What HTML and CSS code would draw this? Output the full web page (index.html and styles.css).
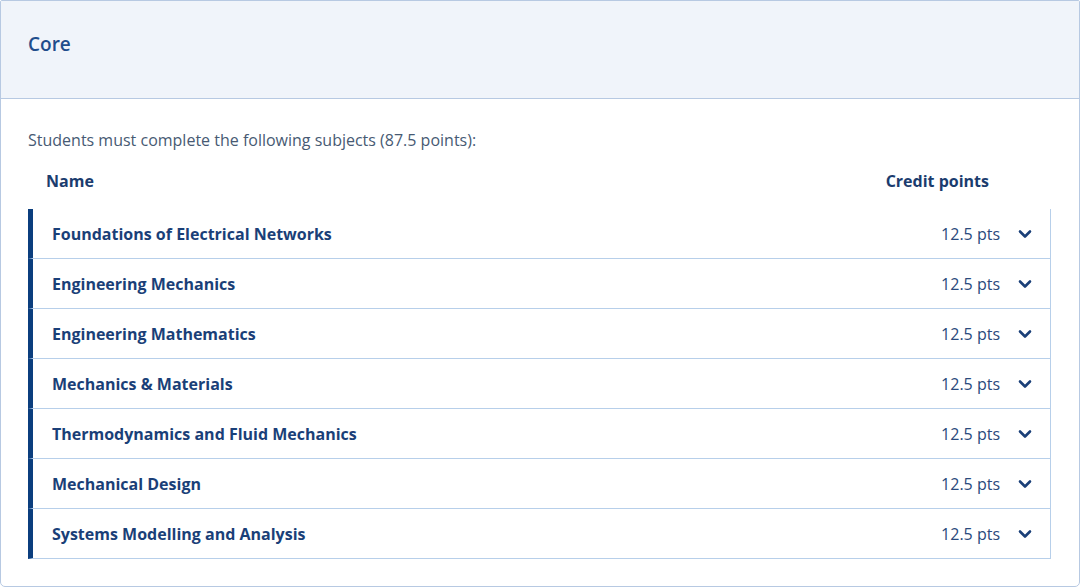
FILE: index.html
```html
<!DOCTYPE html>
<html>
<head>
<meta charset="utf-8">
<link rel="stylesheet" href="styles.css">
</head>
<body>
<section class="card">
  <header class="card-head"><h2 class="card-title">Core</h2></header>
  <div class="card-body">
    <p class="intro">Students must complete the following subjects (87.5 points):</p>
    <div class="thead">
      <span class="th-name">Name</span>
      <span class="th-pts">Credit points</span>
    </div>
    <ul class="rows">
      <li class="row"><span class="name">Foundations of Electrical Networks</span><span class="pts">12.5 pts</span><svg class="chev" viewBox="0 0 14 10" width="14" height="10"><path d="M2 2.5 L7 7.5 L12 2.5" fill="none" stroke="currentColor" stroke-width="2.6" stroke-linecap="round" stroke-linejoin="round"/></svg></li>
      <li class="row"><span class="name">Engineering Mechanics</span><span class="pts">12.5 pts</span><svg class="chev" viewBox="0 0 14 10" width="14" height="10"><path d="M2 2.5 L7 7.5 L12 2.5" fill="none" stroke="currentColor" stroke-width="2.6" stroke-linecap="round" stroke-linejoin="round"/></svg></li>
      <li class="row"><span class="name">Engineering Mathematics</span><span class="pts">12.5 pts</span><svg class="chev" viewBox="0 0 14 10" width="14" height="10"><path d="M2 2.5 L7 7.5 L12 2.5" fill="none" stroke="currentColor" stroke-width="2.6" stroke-linecap="round" stroke-linejoin="round"/></svg></li>
      <li class="row"><span class="name">Mechanics &amp; Materials</span><span class="pts">12.5 pts</span><svg class="chev" viewBox="0 0 14 10" width="14" height="10"><path d="M2 2.5 L7 7.5 L12 2.5" fill="none" stroke="currentColor" stroke-width="2.6" stroke-linecap="round" stroke-linejoin="round"/></svg></li>
      <li class="row"><span class="name">Thermodynamics and Fluid Mechanics</span><span class="pts">12.5 pts</span><svg class="chev" viewBox="0 0 14 10" width="14" height="10"><path d="M2 2.5 L7 7.5 L12 2.5" fill="none" stroke="currentColor" stroke-width="2.6" stroke-linecap="round" stroke-linejoin="round"/></svg></li>
      <li class="row"><span class="name">Mechanical Design</span><span class="pts">12.5 pts</span><svg class="chev" viewBox="0 0 14 10" width="14" height="10"><path d="M2 2.5 L7 7.5 L12 2.5" fill="none" stroke="currentColor" stroke-width="2.6" stroke-linecap="round" stroke-linejoin="round"/></svg></li>
      <li class="row"><span class="name">Systems Modelling and Analysis</span><span class="pts">12.5 pts</span><svg class="chev" viewBox="0 0 14 10" width="14" height="10"><path d="M2 2.5 L7 7.5 L12 2.5" fill="none" stroke="currentColor" stroke-width="2.6" stroke-linecap="round" stroke-linejoin="round"/></svg></li>
    </ul>
  </div>
</section>
</body>
</html>
```

FILE: styles.css
```css
html, body {
  margin: 0;
  padding: 0;
  background: #ffffff;
}
body {
  font-family: "Open Sans", "Noto Sans", sans-serif;
  font-size: 16px;
}
.card {
  width: 1080px;
  height: 587px;
  box-sizing: border-box;
  border: 1px solid #b7c9e2;
  border-radius: 2px 2px 5px 5px;
  overflow: hidden;
}
.card-head {
  height: 97px;
  background: #f0f4fa;
  border-bottom: 1px solid #b7c9e2;
  display: flex;
  align-items: center;
  padding-left: 27px;
}
.card-title {
  margin: 0;
  font-size: 19px;
  font-weight: 600;
  color: #1f4d8c;
  position: relative;
  top: -6px;
}
.card-body {
  padding: 30px 28px 0 27px;
}
.intro {
  margin: 0;
  height: 22px;
  line-height: 22px;
  color: #475a73;
}
.thead {
  display: flex;
  justify-content: space-between;
  padding: 0 62px 0 18px;
  margin-top: 19px;
  height: 22px;
  line-height: 22px;
  font-weight: 700;
  color: #1b3c6e;
}
.rows {
  list-style: none;
  margin: 17px 0 0 0;
  padding: 0;
  width: 1023px;
}
.row {
  height: 49px;
  border-left: 5px solid #0b3e7e;
  border-right: 1px solid #b7cfea;
  border-bottom: 1px solid #b7cfea;
  display: flex;
  align-items: center;
  padding: 0 18px 0 19px;
  color: #1a3f78;
}
.name {
  flex: 1;
  font-weight: 700;
}
.pts {
  color: #2a4a7c;
  margin-right: 18px;
}
.chev {
  color: #1a3f78;
  display: block;
}
```
